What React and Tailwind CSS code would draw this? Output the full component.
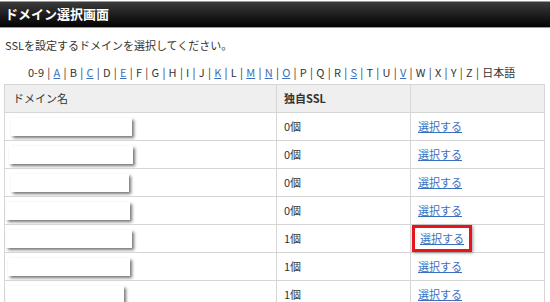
import React from 'react';

const letters = ['0-9', 'A', 'B', 'C', 'D', 'E', 'F', 'G', 'H', 'I', 'J', 'K', 'L', 'M', 'N', 'O', 'P', 'Q', 'R', 'S', 'T', 'U', 'V', 'W', 'X', 'Y', 'Z', '日本語'];
const linked = ['A', 'C', 'E', 'K', 'M', 'N', 'O', 'S', 'V'];

const rows = [
  { ssl: '0個', w: 'w-[121px]', ml: 'ml-[6px]' },
  { ssl: '0個', w: 'w-[124px]', ml: 'ml-[4px]' },
  { ssl: '0個', w: 'w-[118px]', ml: 'ml-[6px]' },
  { ssl: '0個', w: 'w-[124px]', ml: 'ml-[1px]' },
  { ssl: '1個', w: 'w-[126px]', ml: 'ml-[1px]', mark: true },
  { ssl: '1個', w: 'w-[122px]', ml: 'ml-[3px]' },
  { ssl: '1個', w: 'w-[118px]', ml: 'ml-[1px]' },
];

const App = () => {
  return (
    <div className="w-[550px] h-[302px] overflow-hidden bg-white text-[#333] font-['Noto_Sans_CJK_JP',sans-serif] text-[11px]">
      {/* Title bar */}
      <div className="mt-[1px] h-[27px] border-y border-[#9a9a9a] bg-gradient-to-b from-[#3c3c3c] to-[#050505] flex items-center px-[5px]">
        <h1 className="text-white font-bold text-[13px] leading-none -mt-[2px]">ドメイン選択画面</h1>
      </div>

      <p className="mt-[10px] ml-[5px] leading-[14px]">SSLを設定するドメインを選択してください。</p>

      {/* Alphabet index */}
      <div className="mt-[13px] ml-[28px] flex items-center leading-[14px] whitespace-nowrap">
        {letters.map((l, i) => (
          <React.Fragment key={l}>
            {i > 0 && <span className="px-[3.25px]">|</span>}
            {linked.includes(l) ? (
              <a href="#" className="text-[#3a6fc0] underline">{l}</a>
            ) : (
              <span>{l}</span>
            )}
          </React.Fragment>
        ))}
      </div>

      {/* Domain table */}
      <table className="mt-[5px] ml-[4px] w-[540px] border-collapse table-fixed">
        <colgroup>
          <col className="w-[272px]" />
          <col className="w-[134px]" />
          <col className="w-[134px]" />
        </colgroup>
        <thead>
          <tr className="h-[28px] bg-[#efefef]">
            <th className="border border-[#d6d6d6] text-left font-normal px-[8px]">ドメイン名</th>
            <th className="border border-[#d6d6d6] text-left font-bold px-[7px]">独自SSL</th>
            <th className="border border-[#d6d6d6]"></th>
          </tr>
        </thead>
        <tbody>
          {rows.map((r, i) => (
            <tr key={i} className="h-[28px]">
              <td className="border border-[#d6d6d6] p-0">
                <div className={`${r.w} ${r.ml} h-[18px] bg-white shadow-[2px_2px_3px_rgba(0,0,0,0.55)]`}></div>
              </td>
              <td className="border border-[#d6d6d6] px-[7px]">{r.ssl}</td>
              <td className="border border-[#d6d6d6] px-[7px]">
                {r.mark ? (
                  <span className="inline-block -ml-[6px] px-[5px] py-[2px] border-[3px] border-[#e8141b] shadow-[1px_1px_3px_rgba(0,0,0,0.4)]">
                    <a href="#" className="text-[#3a6fc0] underline">選択する</a>
                  </span>
                ) : (
                  <a href="#" className="text-[#3a6fc0] underline">選択する</a>
                )}
              </td>
            </tr>
          ))}
        </tbody>
      </table>
    </div>
  );
};

export default App;
